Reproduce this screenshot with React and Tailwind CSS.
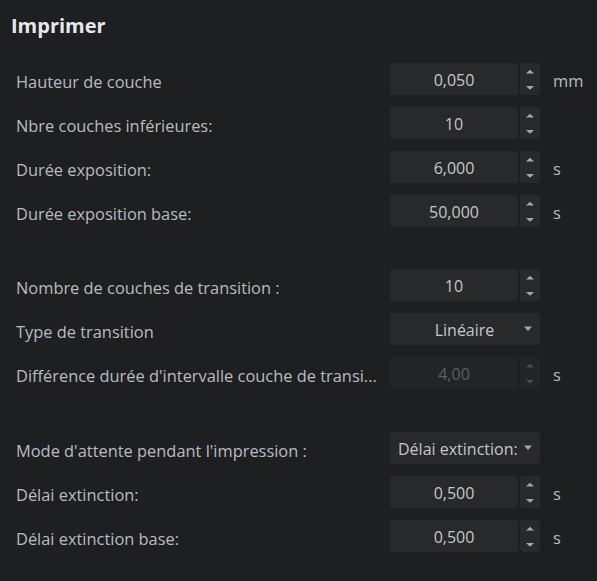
import React from "react";

function Spinner({ disabled }) {
  const c = disabled ? "#4a4d51" : "#a5a9ad";
  return (
    <div className={`ml-[2px] flex h-8 w-[20px] items-center justify-center rounded-[3px] ${disabled ? "bg-[#232426]" : "bg-[#27292a]"}`}>
      <svg width="20" height="32" viewBox="0 0 20 32">
        <polygon points="6,10.5 14,10.5 10,6.8" fill={c} />
        <polygon points="6,23 14,23 10,26.8" fill={c} />
      </svg>
    </div>
  );
}

function Caret() {
  return (
    <svg width="10" height="6" viewBox="0 0 10 6">
      <polygon points="1,0.5 9,0.5 5,5" fill="#a5a9ad" />
    </svg>
  );
}

function Row({ label, children, unit }) {
  return (
    <div className="flex h-8 items-center pl-4">
      <div className="w-[362px] whitespace-nowrap pt-[6px] text-[16.4px] leading-[26px] text-[#b8bcc1]">{label}</div>
      <div className="ml-3 flex w-[150px]">{children}</div>
      {unit && <div className="ml-[13px] pt-[4px] text-[16.4px] leading-[26px] text-[#b8bcc1]">{unit}</div>}
    </div>
  );
}

function Num({ value, disabled }) {
  return (
    <>
      <div className={`flex h-8 w-[128px] items-center justify-center rounded-[3px] pt-[1px] text-[16px] ${disabled ? "bg-[#232426] text-[#5b5e62]" : "bg-[#27292a] text-[#c3c7cb]"}`}>
        {value}
      </div>
      <Spinner disabled={disabled} />
    </>
  );
}

function Select({ value, left }) {
  return (
    <div className="flex h-8 w-[150px] items-center rounded-[3px] bg-[#27292a] text-[16px] text-[#c3c7cb]">
      {left ? (
        <div className="flex-1 whitespace-nowrap pl-[8px] pt-[1px]">{value}</div>
      ) : (
        <div className="flex-1 pl-[16px] pt-[1px] text-center">{value}</div>
      )}
      <div className="mr-[7px] flex items-center">
        <Caret />
      </div>
    </div>
  );
}

export default function App() {
  return (
    <div
      className="h-[581px] w-[597px] overflow-hidden bg-[#1e1f21]"
      style={{ fontFamily: '"Open Sans", "Noto Sans", sans-serif' }}
    >
      <div className="pl-[11px] pt-[12px] text-[20px] font-bold leading-[28px] text-[#e6e9ec]">Imprimer</div>
      <div className="mt-[23px] flex flex-col gap-3">
        <Row label="Hauteur de couche" unit="mm"><Num value="0,050" /></Row>
        <Row label="Nbre couches inférieures:"><Num value="10" /></Row>
        <Row label="Durée exposition:" unit="s"><Num value="6,000" /></Row>
        <Row label="Durée exposition base:" unit="s"><Num value="50,000" /></Row>
      </div>
      <div className="mt-[42px] flex flex-col gap-3">
        <Row label="Nombre de couches de transition :"><Num value="10" /></Row>
        <Row label="Type de transition"><Select value="Linéaire" /></Row>
        <Row label="Différence durée d'intervalle couche de transi..." unit="s"><Num value="4,00" disabled /></Row>
      </div>
      <div className="mt-[43px] flex flex-col gap-3">
        <Row label="Mode d'attente pendant l'impression :"><Select value="Délai extinction:" left /></Row>
        <Row label="Délai extinction:" unit="s"><Num value="0,500" /></Row>
        <Row label="Délai extinction base:" unit="s"><Num value="0,500" /></Row>
      </div>
    </div>
  );
}
